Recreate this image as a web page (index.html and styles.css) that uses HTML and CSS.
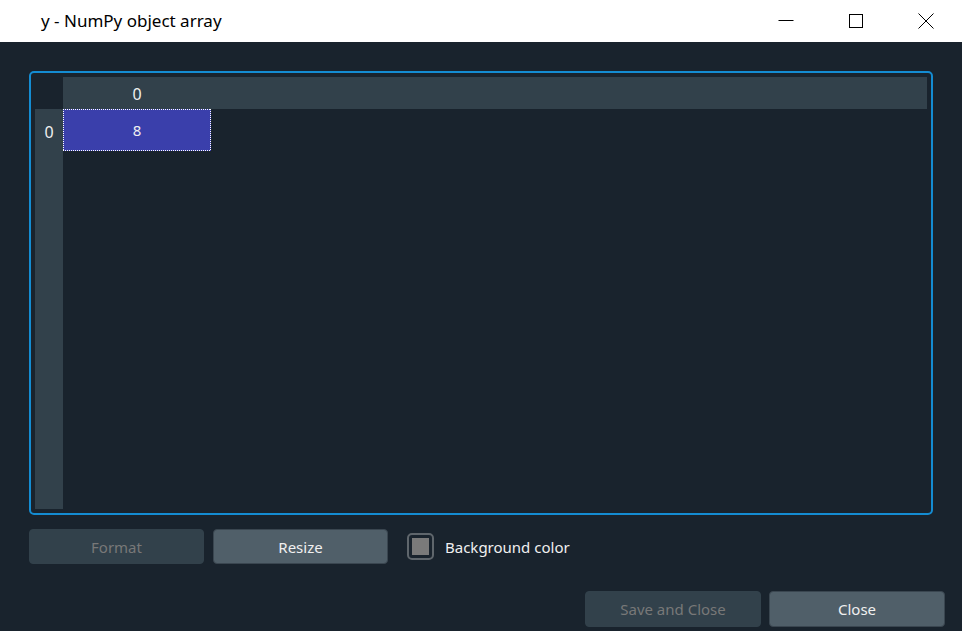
FILE: index.html
```html
<!DOCTYPE html>
<html>
<head>
<meta charset="utf-8">
<link rel="stylesheet" href="styles.css">
</head>
<body>
<div class="window">
  <div class="titlebar">
    <div class="title">y - NumPy object array</div>
    <div class="caption-buttons">
      <div class="cap-btn">
        <svg width="16" height="16" viewBox="0 0 16 16"><path d="M0.5 7.5H15.5" stroke="#000" stroke-width="1"/></svg>
      </div>
      <div class="cap-btn">
        <svg width="16" height="16" viewBox="0 0 16 16"><rect x="1.5" y="1.5" width="13" height="13" fill="none" stroke="#000" stroke-width="1"/></svg>
      </div>
      <div class="cap-btn">
        <svg width="16" height="16" viewBox="0 0 16 16"><path d="M0.5 0.5L15.5 15.5M15.5 0.5L0.5 15.5" stroke="#000" stroke-width="1"/></svg>
      </div>
    </div>
  </div>
  <div class="content">
    <div class="table-frame">
      <div class="table-grid">
        <div class="corner"></div>
        <div class="col-header"><div class="col-head-cell">0</div></div>
        <div class="row-header"><div class="row-head-cell">0</div></div>
        <div class="cells">
          <div class="cell selected">8</div>
        </div>
      </div>
    </div>
    <div class="controls">
      <button class="btn disabled w175">Format</button>
      <button class="btn active w175">Resize</button>
      <label class="check">
        <span class="check-box"><span class="check-fill"></span></span>
        <span class="check-label">Background color</span>
      </label>
    </div>
    <div class="footer">
      <button class="btn disabled w176">Save and Close</button>
      <button class="btn active w176">Close</button>
    </div>
  </div>
</div>
</body>
</html>
```

FILE: styles.css
```css
* { box-sizing: border-box; }
html, body {
  margin: 0;
  padding: 0;
  width: 962px;
  height: 631px;
  overflow: hidden;
  background: #19232D;
  font-family: "Noto Sans", "Open Sans", sans-serif;
}
.window {
  width: 962px;
  height: 631px;
  display: flex;
  flex-direction: column;
}
.titlebar {
  height: 42px;
  background: #ffffff;
  display: flex;
  align-items: center;
  justify-content: space-between;
  flex-shrink: 0;
}
.title {
  padding-left: 41px;
  font-size: 17px;
  color: #000;
  padding-bottom: 1px;
}
.caption-buttons {
  display: flex;
  height: 42px;
  padding-right: 1px;
}
.cap-btn {
  width: 70px;
  height: 42px;
  display: flex;
  align-items: center;
  justify-content: center;
}
.content {
  flex: 1;
  padding: 29px 29px 0 29px;
  display: flex;
  flex-direction: column;
}
.table-frame {
  width: 904px;
  height: 444px;
  border: 2px solid #148CD2;
  border-radius: 5px;
  padding: 4px;
}
.table-grid {
  width: 100%;
  height: 100%;
  display: grid;
  grid-template-columns: 28px 1fr;
  grid-template-rows: 32px 1fr;
}
.corner { background: #19232D; }
.col-header {
  background: #32414B;
  display: flex;
}
.col-head-cell {
  width: 148px;
  display: flex;
  align-items: center;
  justify-content: center;
  color: #F0F0F0;
  font-size: 16px;
  padding-top: 1px;
}
.row-header {
  background: #32414B;
}
.row-head-cell {
  height: 42px;
  display: flex;
  align-items: center;
  justify-content: center;
  color: #F0F0F0;
  font-size: 16px;
  padding-top: 4px;
}
.cells { background: #19232D; }
.cell {
  width: 148px;
  height: 42px;
  display: flex;
  align-items: center;
  justify-content: center;
  color: #F0F0F0;
  font-size: 15px;
}
.cell.selected {
  background-color: #3A3FAB;
  background-image:
    repeating-linear-gradient(90deg, #ffffff 0 1px, transparent 1px 2px),
    repeating-linear-gradient(90deg, #ffffff 0 1px, transparent 1px 2px),
    repeating-linear-gradient(180deg, #ffffff 0 1px, transparent 1px 2px),
    repeating-linear-gradient(180deg, #ffffff 0 1px, transparent 1px 2px);
  background-size: 100% 1px, 100% 1px, 1px 100%, 1px 100%;
  background-position: 0 0, 0 100%, 0 0, 100% 0;
  background-repeat: no-repeat;
}
.controls {
  margin-top: 14px;
  display: flex;
  align-items: center;
  height: 35px;
}
.btn {
  height: 35px;
  border-radius: 4px;
  font-family: "Noto Sans", "Open Sans", sans-serif;
  font-size: 15px;
  padding: 0;
  border: 1px solid transparent;
}
.w175 { width: 175px; }
.w176 { width: 176px; height: 36px; }
.btn.disabled {
  background: #32414B;
  color: #787878;
  border-color: #32414B;
}
.btn.active {
  background: #505F69;
  color: #F0F0F0;
  border-color: #3a4650;
}
.controls .btn + .btn { margin-left: 9px; }
.check {
  display: flex;
  align-items: center;
  margin-left: 19px;
}
.check-box {
  width: 27px;
  height: 27px;
  border: 2px solid #5f666c;
  border-radius: 5px;
  display: flex;
  align-items: center;
  justify-content: center;
}
.check-fill {
  width: 17px;
  height: 17px;
  background: #7a7a7a;
}
.check-label {
  margin-left: 11px;
  color: #F0F0F0;
  font-size: 15px;
}
.footer {
  margin-top: 27px;
  display: flex;
  justify-content: flex-end;
  margin-right: -12px;
  gap: 8px;
}
```
